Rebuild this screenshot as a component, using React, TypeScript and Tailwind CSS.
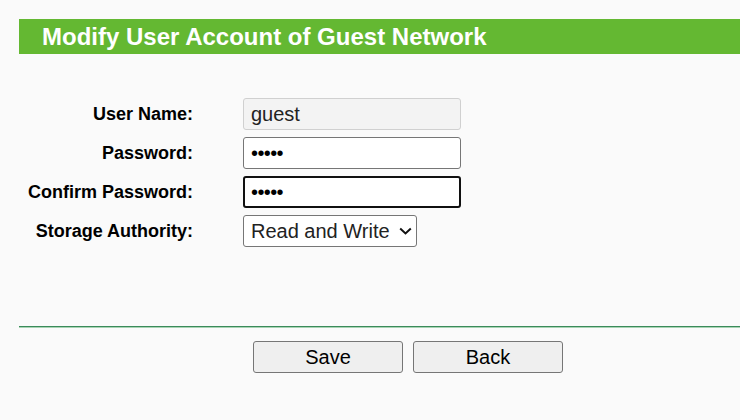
import React from "react";

export default function App() {
  const label = "w-[193px] text-right font-bold text-[18px] leading-none text-black";
  return (
    <div className="w-[740px] h-[420px] bg-[#fafafa] overflow-hidden" style={{ fontFamily: '"Liberation Sans", Arial, sans-serif' }}>
      <div className="pt-[19px] pl-[19px]">
        <div className="h-[35px] bg-[#64b832] flex items-center pl-[23px]">
          <span className="text-white font-bold text-[24px] leading-none">Modify User Account of Guest Network</span>
        </div>
      </div>
      <div className="mt-[44px] flex flex-col gap-[7px]">
        <div className="flex items-center h-[32px]">
          <div className={label}>User Name:</div>
          <div className="ml-[50px] w-[218px] h-[32px] rounded-[3px] border border-[#d0d0d0] bg-[#f3f3f3] flex items-center pl-[7px] text-[20px] text-[#222]">guest</div>
        </div>
        <div className="flex items-center h-[32px]">
          <div className={label}>Password:</div>
          <div className="ml-[50px] w-[218px] h-[32px] rounded-[3px] border border-[#767676] bg-white flex items-center pl-[7px] text-[20px] text-black tracking-[-0.6px]">•••••</div>
        </div>
        <div className="flex items-center h-[32px]">
          <div className={label}>Confirm Password:</div>
          <div className="ml-[50px] w-[218px] h-[32px] rounded-[3px] border-2 border-[#101010] bg-white flex items-center pl-[6px] text-[20px] text-black tracking-[-0.6px]">•••••</div>
        </div>
        <div className="flex items-center h-[32px]">
          <div className={label}>Storage Authority:</div>
          <div className="ml-[50px] w-[174px] h-[32px] rounded-[3px] border border-[#767676] bg-white flex items-center pl-[7px] text-[20px] text-[#222]">
            <span>Read and Write</span>
            <svg className="ml-[9px]" width="13" height="8" viewBox="0 0 13 8"><path d="M1.2 1.5 L6.5 6.5 L11.8 1.5" fill="none" stroke="#111" strokeWidth="2" /></svg>
          </div>
        </div>
      </div>
      <div className="mt-[79px] ml-[19px] h-[2px] bg-[#3a8a5a] border-b border-[#a8d4b4]" />
      <div className="mt-[13px] flex gap-[10px] pl-[253px]">
        <div className="w-[150px] h-[32px] rounded-[3px] border border-[#767676] bg-[#efefef] flex items-center justify-center text-[20px] text-black">Save</div>
        <div className="w-[150px] h-[32px] rounded-[3px] border border-[#767676] bg-[#efefef] flex items-center justify-center text-[20px] text-black">Back</div>
      </div>
    </div>
  );
}
